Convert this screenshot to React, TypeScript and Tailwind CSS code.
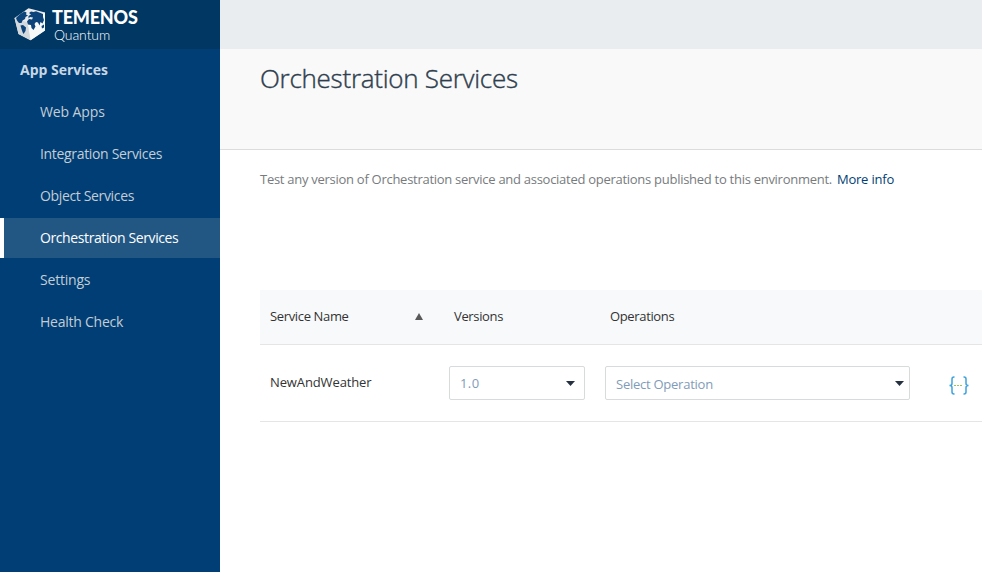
import React from "react";

const navItems = [
  { label: "Web Apps", tracking: "tracking-[-0.1px]" },
  { label: "Integration Services", tracking: "tracking-[-0.33px]" },
  { label: "Object Services", tracking: "tracking-[-0.35px]" },
  { label: "Orchestration Services", tracking: "tracking-[-0.4px]", active: true },
  { label: "Settings", tracking: "tracking-[-0.2px]" },
  { label: "Health Check", tracking: "tracking-[-0.24px]" },
];

function CubeLogo() {
  return (
    <svg width="32" height="33" viewBox="0 0 32 33" className="shrink-0">
      <path d="M0.500 10 L14.500 0.300 L31 4.500 L31 22.500 L16.500 32.300 L4.500 26 Z" fill="#e9ebed" />
      <path d="M13.500 14.500 L31 4.500 L31 22.500 L16.500 32.300 Z" fill="#f8f9f9" />
      <path d="M0.500 10 L13.500 14.500 L16.500 32.300 L4.500 26 Z" fill="#d3d8dc" />
      <path d="M2 10 L4 8 L7 5.500 L10.500 3.500 L12.500 4.500 L12 6.500 L14 7.500 L11.500 9 L11 11 L8.500 12.500 L7.500 15 L5 15 L3 12.500 Z" fill="#0b437a" />
      <path d="M6.500 17.500 L9 17 L12 19.500 L11.500 23 L9.500 26 L8.500 24 L7.500 21 Z" fill="#0b437a" />
      <path d="M15 5 L17 3.500 L19.500 4 L22 3.200 L26.500 5 L29 6 L29 9 L30 12 L28.500 15.500 L26.500 14 L25.500 17.500 L24 14.500 L22 14 L20.500 16 L21.500 18.500 L19.500 22 L17.500 20 L17 17 L14 16.500 L13 13.500 L15 11 L18 11.500 L19 9.500 L16 9 L14.500 10.500 L14.500 8 L17 6.500 Z" fill="#0b437a" />
      <path d="M27.500 18 L30 16.500 L30 19.500 L28 20.500 Z" fill="#0b437a" />
    </svg>
  );
}

function Caret({ className = "" }: { className?: string }) {
  return (
    <svg width="9" height="5" viewBox="0 0 9 5" className={className}>
      <path d="M0 0 H9 L4.500 5 Z" fill="#253040" />
    </svg>
  );
}

export default function App() {
  return (
    <div className="flex h-[572px] w-[982px] overflow-hidden bg-white font-['Open_Sans','Noto_Sans',sans-serif]">
      <aside className="w-[220px] shrink-0 bg-[#003e75]">
        <div className="flex h-[49px] items-start bg-[#003763] pt-[8px] pl-[14px] text-white">
          <CubeLogo />
          <div className="ml-[6px] flex flex-col font-['Lato',sans-serif]">
            <span className="h-[18px] text-[18px] leading-[18px] font-black tracking-[-0.2px] whitespace-nowrap">TEMENOS</span>
            <span className="ml-[2px] h-[17px] text-[14px] leading-[17px] font-light tracking-[-0.1px] whitespace-nowrap">Quantum</span>
          </div>
        </div>
        <div className="flex h-10 items-center pl-5 text-[14px] font-bold text-[#c9d7e4]">
          <span>App Services</span>
        </div>
        <nav className="mt-[3px] flex flex-col gap-[2px] text-[14px] text-[#c4cdd4]">
          {navItems.map((item) => (
            <div
              key={item.label}
              className={
                item.active
                  ? "flex h-10 items-center border-l-4 border-white bg-[#225784] pb-[2px] pl-9 text-white"
                  : "flex h-10 items-center pb-[2px] pl-10"
              }
            >
              <span className={item.tracking}>{item.label}</span>
            </div>
          ))}
        </nav>
      </aside>
      <main className="flex min-w-0 flex-1 flex-col">
        <div className="h-[49px] bg-[#e9edf0]" />
        <header className="h-[101px] border-b border-[#dcdcdc] bg-[#f9f9f9] pt-[11px] pl-10">
          <h1 className="text-[26px] leading-9 font-light tracking-[-0.27px] text-[#2f3e4e] [-webkit-text-stroke:0.4px_#2f3e4e]"><span>Orchestration Services</span></h1>
        </header>
        <p className="mt-[19px] ml-10 h-5 text-[13px] leading-5 whitespace-nowrap text-[#777b7e]">
          <span className="tracking-[-0.275px]">Test any version of Orchestration service and associated operations published to this environment.</span>
          <span className="ml-[5px] tracking-[-0.2px] text-[#003e75]">More info</span>
        </p>
        <section className="mt-[101px] ml-10 text-[13px] text-[#333]">
          <div className="flex h-[55px] items-center border-b border-[#e5e5e5] bg-[#f8f9fb] tracking-[-0.35px]">
            <div className="flex w-[184px] items-center justify-between pr-[21px] pl-[10px]">
              <span>Service Name</span>
              <svg width="8" height="7" viewBox="0 0 8 7" className="mb-px"><path d="M4 0 L8 7 H0 Z" fill="#595959" /></svg>
            </div>
            <div className="w-[156px] pl-[10px]"><span>Versions</span></div>
            <div className="pl-[10px]"><span>Operations</span></div>
          </div>
          <div className="flex h-[77px] items-center border-b border-[#e5e5e5]">
            <div className="w-[189px] pl-[10px] tracking-[-0.12px]"><span>NewAndWeather</span></div>
            <div className="flex h-[34px] w-[136px] items-center justify-between rounded-[2px] border border-[#d9dadb] pr-[9px] pl-[10px] text-[#7f9cb8]">
              <span className="pt-[2px] tracking-[0.4px]">1.0</span><Caret className="mt-px" />
            </div>
            <div className="ml-5 flex h-[34px] w-[305px] items-center justify-between rounded-[2px] border border-[#d9dadb] pr-[5px] pl-[10px] text-[#7f9cb8]">
              <span className="pt-[4px] tracking-[-0.25px]">Select Operation</span><Caret />
            </div>
            <svg width="20" height="19" viewBox="0 0 20 19" className="mt-[4px] ml-[39px]" fill="none">
              <path d="M5.500 1 H5 Q3 1 3 3 V7.500 Q3 9.500 0.500 9.500 Q3 9.500 3 11.500 V16 Q3 18 5 18 H5.500 M14.500 1 H15 Q17 1 17 3 V7.500 Q17 9.500 19.500 9.500 Q17 9.500 17 11.500 V16 Q17 18 15 18 H14.500" stroke="#3ba3dd" strokeWidth="1.500" />
              <path d="M5 9.500 H13" stroke="#9cc653" strokeDasharray="2 1" />
            </svg>
          </div>
        </section>
      </main>
    </div>
  );
}
